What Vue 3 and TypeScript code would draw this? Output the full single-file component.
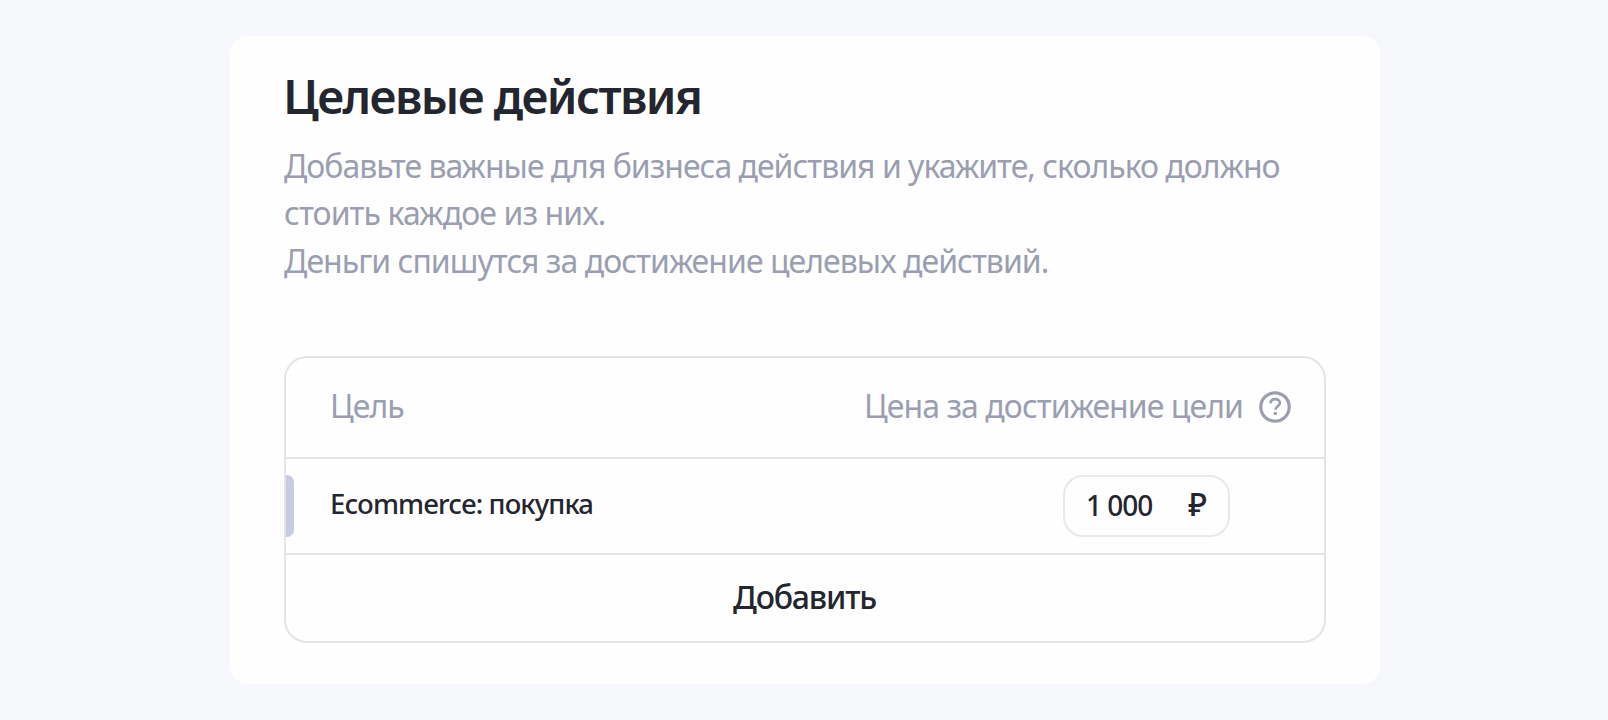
<template>
  <main class="page">
    <section class="card">
      <h1 class="card-title">Целевые действия</h1>
      <p class="card-text">
        <span class="line line--first">Добавьте важные для бизнеса действия и укажите, сколько должно</span>
        <span class="line">стоить каждое из них.</span>
        <span class="line line--last">Деньги спишутся за достижение целевых действий.</span>
      </p>

      <div class="goals">
        <div class="goals-head">
          <span class="goals-label">Цель</span>
          <span class="goals-price">Цена за достижение цели</span>
          <svg class="goals-help" viewBox="0 0 32 32" fill="none" stroke="currentColor" aria-hidden="true">
            <circle cx="16" cy="16" r="14.2" stroke-width="3.2" />
            <path d="M11.4 12.4C11.7 9.6 13.5 8.1 16.2 8.1C19 8.1 20.9 9.7 20.9 12C20.9 15.2 16.4 15.3 16.4 18.7" stroke-width="2.7" />
            <circle cx="16.3" cy="22.5" r="1.8" fill="currentColor" stroke="none" />
          </svg>
        </div>

        <div v-for="goal in goals" :key="goal.name" class="goals-row">
          <span class="goals-mark" />
          <span class="goals-name">{{ goal.name }}</span>
          <label class="price">
            <span class="price-value">{{ formatPrice(goal.price) }}</span>
            <span class="price-currency">₽</span>
          </label>
        </div>

        <button class="goals-add" type="button">Добавить</button>
      </div>
    </section>
  </main>
</template>

<script setup lang="ts">
import { ref } from "vue";

interface Goal {
  name: string;
  price: number;
}

const goals = ref<Goal[]>([{ name: "Ecommerce: покупка", price: 1000 }]);

const formatPrice = (value: number): string =>
  String(value).replace(/\B(?=(\d{3})+$)/g, " ");
</script>

<style>
body {
  background: #f6f8fc;
}
</style>

<style scoped>
.page {
  box-sizing: border-box;
  color: #24262f;
  font-family: "Noto Sans", "Open Sans", sans-serif;
  height: 720px;
  overflow: hidden;
  padding: 36px 228px 0 230px;
}
.card {
  background: #fefefe;
  border-radius: 18px;
  box-sizing: border-box;
  height: 648px;
  padding: 32px 54px 0;
}
.card-title {
  font-size: 47px;
  font-weight: 600;
  letter-spacing: -1.57px;
  line-height: 56px;
  margin: 0 0 0 -1px;
  white-space: nowrap;
}
.card-text {
  color: #9b9eb1;
  font-size: 32px;
  line-height: 47.3px;
  margin: 18px 0 0;
}
.line { display: block; letter-spacing: -0.9px; white-space: nowrap; }
.line--first { letter-spacing: -0.99px; }
.line--last { letter-spacing: -0.95px; }
.goals {
  border: 2px solid #e1e5e8;
  border-radius: 23px;
  box-sizing: border-box;
  height: 287px;
  margin-top: 72px;
  width: 1042px;
}
.goals-head {
  align-items: center;
  border-bottom: 2px solid #e1e5e8;
  box-sizing: border-box;
  color: #9b9eb1;
  display: flex;
  font-size: 32px;
  height: 101px;
  letter-spacing: -0.93px;
  line-height: 44px;
  padding: 0 33px 0 44px;
}
.goals-label,
.goals-price { padding-bottom: 3px; }
.goals-price { margin-left: auto; }
.goals-help { height: 32px; margin-left: 16px; width: 32px; }
.goals-row {
  align-items: center;
  border-bottom: 2px solid #e1e5e8;
  box-sizing: border-box;
  display: flex;
  height: 96px;
  padding-right: 94px;
}
.goals-mark {
  background: #c9cce0;
  border-radius: 0 7px 7px 0;
  height: 62px;
  width: 8px;
}
.goals-name {
  font-size: 27.5px;
  font-weight: 500;
  letter-spacing: -0.9px;
  margin-left: 36px;
  padding-bottom: 4px;
}
.price {
  align-items: center;
  border: 2px solid #e9e9ed;
  border-radius: 20px;
  box-sizing: border-box;
  display: flex;
  height: 62px;
  justify-content: space-between;
  margin-left: auto;
  padding: 0 21px;
  width: 167px;
}
.price-value {
  font-size: 28px;
  font-weight: 500;
  letter-spacing: -1px;
  padding-bottom: 1px;
}
.price-currency {
  font-size: 32px;
  font-weight: 500;
  line-height: 36px;
  padding-bottom: 4px;
}
.goals-add {
  background: none;
  border: 0;
  color: inherit;
  cursor: pointer;
  display: block;
  font: inherit;
  font-size: 32px;
  font-weight: 500;
  height: 86px;
  letter-spacing: -1.2px;
  padding: 0 1px 3px 0;
  width: 100%;
}
</style>
